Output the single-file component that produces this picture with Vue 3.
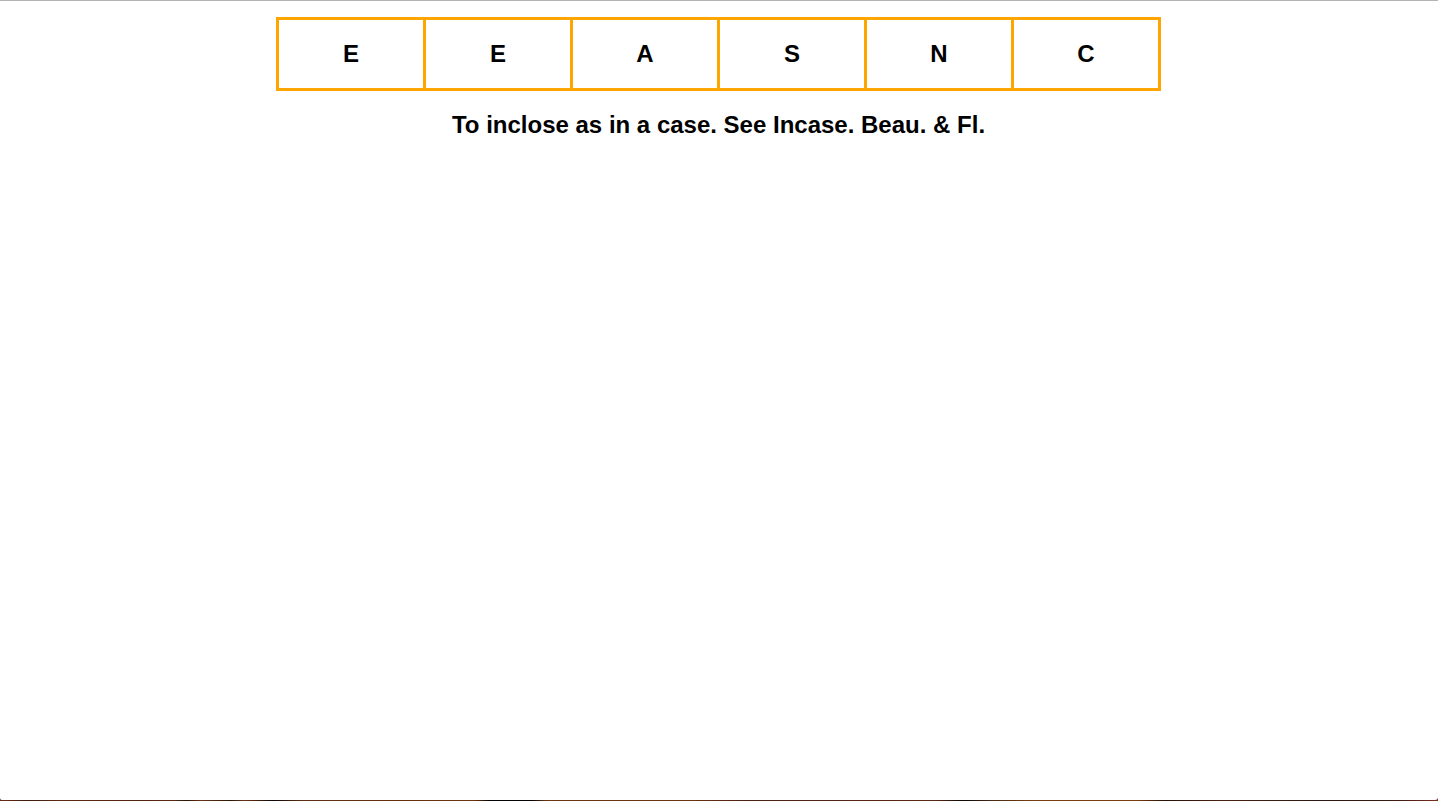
<script setup>
const letters = ['E', 'E', 'A', 'S', 'N', 'C']
const clue = 'To inclose as in a case. See Incase. Beau. & Fl.'
</script>

<template>
  <div class="desktop">
    <main class="page">
      <ul class="tiles">
        <li v-for="(letter, index) in letters" :key="index" class="tile">{{ letter }}</li>
      </ul>
      <p class="clue">{{ clue }}</p>
    </main>
  </div>
</template>

<style>
body {
  margin: 0;
}
</style>

<style scoped>
.desktop {
  box-sizing: border-box;
  min-height: 100vh;
  display: flex;
  padding-bottom: 1px;
  background: linear-gradient(90deg, #6b2e14 0%, #3a1a0c 2%, #5e2a10 4%, #4e240f 10%, #5e2a10 12%, #2a1408 13%, #6b3412 14%, #2a1408 16%, #6b3412 17%, #0c0604 19%, #5e2e12 21%, #6b3412 33%, #050303 34%, #050303 37%, #6b3412 38%, #6b3412 48%, #4a2010 52%, #5a2a14 65%, #0c0604 67%, #4a2a14 69%, #7a3e10 72%, #7a3e10 79%, #2a1008 81%, #4a2010 85%, #2a1810 92%, #3a1a10 97%, #7a2e1c 100%);
}

.page {
  flex: 1;
  border-top: 1px solid #b4b4b4;
  border-radius: 0 0 3px 2px;
  padding: 16px 1px 16px 0;
  background: #fff;
  color: #000;
  font-family: Helvetica, "Liberation Sans", Arial, sans-serif;
  font-size: 24px;
  font-weight: bold;
  line-height: 28px;
  text-align: center;
}

.tiles {
  display: flex;
  justify-content: center;
  margin: 0;
  padding: 0;
  list-style: none;
}

.tile {
  box-sizing: border-box;
  width: 150px;
  padding: 20px 0;
  border: 3px solid orange;
}

.tile + .tile {
  margin-left: -3px;
}

.clue {
  margin: 20px 0 0;
}
</style>
